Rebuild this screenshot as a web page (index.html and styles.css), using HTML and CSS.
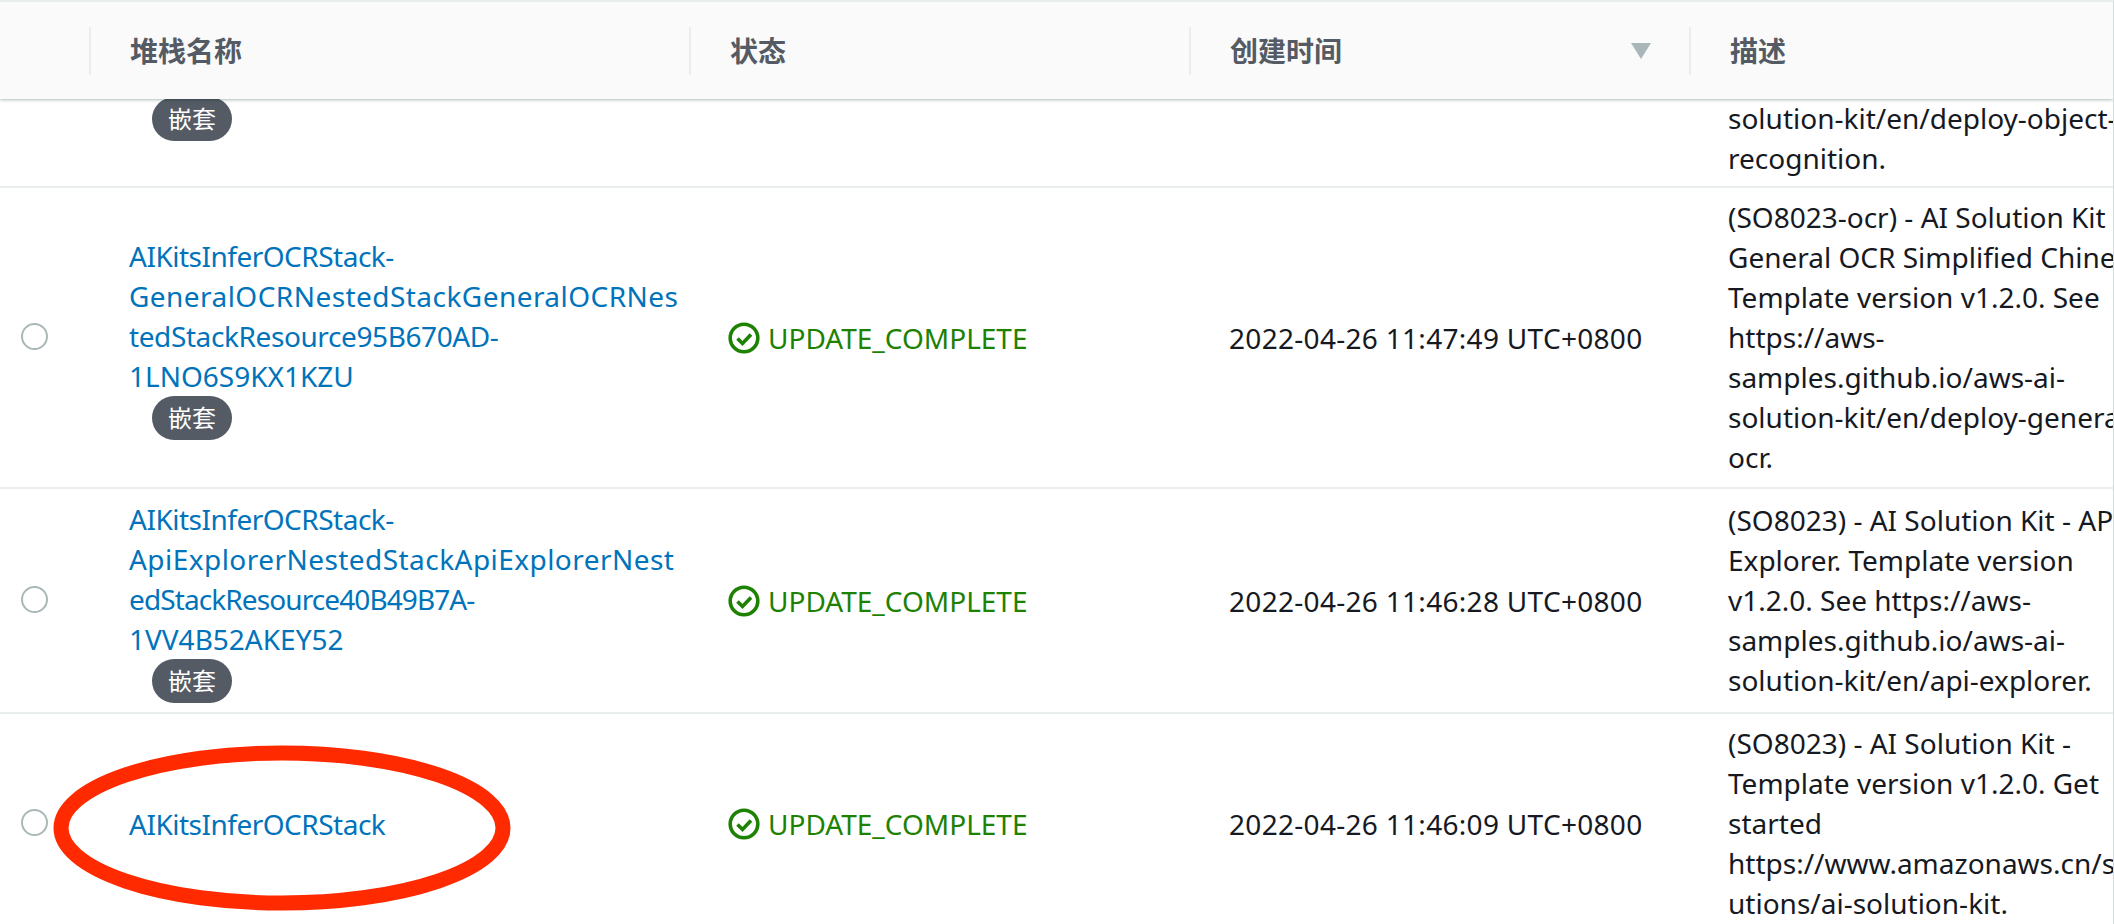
FILE: index.html
```html
<!DOCTYPE html>
<html lang="zh-CN">
<head>
  <meta charset="UTF-8">
  <title>堆栈</title>
  <link rel="stylesheet" href="styles.css">
</head>
<body>

  <div class="table">
    <div class="head">
      <div class="head-cell"></div>
      <div class="head-cell">堆栈名称</div>
      <div class="head-cell">状态</div>
      <div class="head-cell sorted">创建时间 <span class="sort-arrow"></span></div>
      <div class="head-cell">描述</div>
    </div>

    <div class="row row-cut">
      <div class="cell"></div>
      <div class="cell name"><span class="badge">嵌套</span></div>
      <div class="cell"></div>
      <div class="cell"></div>
      <div class="cell desc">solution-kit/en/deploy-object-<br>recognition.</div>
    </div>

    <div class="row">
      <div class="cell"><span class="radio"></span></div>
      <div class="cell name">
        <a href="#"><span class="snug">AIKitsInferOCRStack-</span><span class="wide">GeneralOCRNestedStackGeneralOCRNes</span><span class="snug-more">tedStackResource95B670AD-</span><span>1LNO6S9KX1KZU</span></a>
        <span class="badge">嵌套</span>
      </div>
      <div class="cell status">
        <svg class="ok" viewBox="0 0 32 32"><circle cx="16" cy="16" r="13.8" fill="none" stroke="#1d8102" stroke-width="3.6"/><path d="M9.5 16.5l5 5 8.5-9" fill="none" stroke="#1d8102" stroke-width="3.6"/></svg>
        UPDATE_COMPLETE
      </div>
      <div class="cell date">2022-04-26 11:47:49 UTC+0800</div>
      <div class="cell desc">(SO8023-ocr) - AI Solution Kit -<br>General OCR Simplified Chinese.<br>Template version v1.2.0. See<br>https://aws-<br>samples.github.io/aws-ai-<br>solution-kit/en/deploy-general-<br>ocr.</div>
    </div>

    <div class="row">
      <div class="cell"><span class="radio"></span></div>
      <div class="cell name">
        <a href="#"><span class="snug">AIKitsInferOCRStack-</span><span class="wide">ApiExplorerNestedStackApiExplorerNest</span><span class="snug-most">edStackResource40B49B7A-</span><span>1VV4B52AKEY52</span></a>
        <span class="badge">嵌套</span>
      </div>
      <div class="cell status">
        <svg class="ok" viewBox="0 0 32 32"><circle cx="16" cy="16" r="13.8" fill="none" stroke="#1d8102" stroke-width="3.6"/><path d="M9.5 16.5l5 5 8.5-9" fill="none" stroke="#1d8102" stroke-width="3.6"/></svg>
        UPDATE_COMPLETE
      </div>
      <div class="cell date">2022-04-26 11:46:28 UTC+0800</div>
      <div class="cell desc">(SO8023) - AI Solution Kit - API<br>Explorer. Template version<br>v1.2.0. See https://aws-<br>samples.github.io/aws-ai-<br>solution-kit/en/api-explorer.</div>
    </div>

    <div class="row">
      <div class="cell"><span class="radio"></span></div>
      <div class="cell name"><a href="#"><span class="snug">AIKitsInferOCRStack</span></a></div>
      <div class="cell status">
        <svg class="ok" viewBox="0 0 32 32"><circle cx="16" cy="16" r="13.8" fill="none" stroke="#1d8102" stroke-width="3.6"/><path d="M9.5 16.5l5 5 8.5-9" fill="none" stroke="#1d8102" stroke-width="3.6"/></svg>
        UPDATE_COMPLETE
      </div>
      <div class="cell date">2022-04-26 11:46:09 UTC+0800</div>
      <div class="cell desc">(SO8023) - AI Solution Kit -<br>Template version v1.2.0. Get<br>started<br>https://www.amazonaws.cn/sol<br>utions/ai-solution-kit.</div>
    </div>

    <svg class="circle-mark" viewBox="0 0 470 178"><ellipse cx="235" cy="89" rx="221" ry="75" fill="none" stroke="#ff2a00" stroke-width="15"/></svg>
  </div>

</body>
</html>
```

FILE: styles.css
```css
html, body {
  height: 100%;
}

body {
  margin: 0;
  overflow: hidden;
  background: #fff;
  color: #16191f;
  font-family: 'Noto Sans', 'Noto Sans CJK SC', sans-serif;
  font-size: 28px;
  line-height: 40px;
}

.table {
  position: relative;
  height: 100%;
  overflow: hidden;
  border-right: 1px solid #d5dbdb;
  border-top: 2px solid #eaeded;
}

.head, .row {
  display: grid;
  grid-template-columns: 89px 600px 500px 500px 1fr;
}

.head {
  position: relative;
  z-index: 2;
  height: 97px;
  align-items: center;
  background: #fafafa;
  box-shadow: 0 1px 3px rgba(0, 28, 36, 0.3);
  color: #545b64;
  font-weight: 700;
}

.head-cell {
  height: 48px;
  padding-left: 39px;
  border-left: 2px solid #eaeded;
  line-height: 48px;
}

.head-cell:first-child {
  border-left: none;
}

.sorted {
  display: flex;
  justify-content: space-between;
  align-items: center;
  padding-right: 38px;
}

.sort-arrow {
  width: 0;
  height: 0;
  border-left: 10px solid transparent;
  border-right: 10px solid transparent;
  border-top: 16px solid #aab7b8;
}

.row {
  align-items: center;
  border-bottom: 2px solid #eaeded;
}

/* first row is scrolled under the header */
.row-cut {
  grid-template-rows: 87px;
  align-items: end;
}

.row-cut .desc {
  padding-bottom: 8px;
}

.row-cut .name {
  padding-bottom: 45px;
}

.cell {
  white-space: nowrap;
}

.radio {
  display: block;
  box-sizing: border-box;
  width: 27px;
  height: 27px;
  margin: -3px 0 0 21px;
  border: 2px solid #aab7b8;
  border-radius: 50%;
}

.name {
  padding: 10px 0 9px 40px;
}

.name a {
  display: block;
  color: #0073bb;
  text-decoration: none;
}

.name a span {
  display: block;
}

.name .snug {
  letter-spacing: -0.5px;
}

.name .snug-more {
  letter-spacing: -0.4px;
}

.name .snug-most {
  letter-spacing: -0.9px;
}

.name .wide {
  letter-spacing: 0.45px;
}

.badge {
  display: block;
  width: 80px;
  height: 44px;
  margin-left: 23px;
  border-radius: 22px;
  background: #545b64;
  color: #fff;
  font-size: 24px;
  line-height: 44px;
  text-align: center;
}

.status {
  display: flex;
  align-items: center;
  gap: 8px;
  padding-left: 39px;
  color: #1d8102;
}

.ok {
  width: 32px;
  height: 32px;
}

.date {
  padding-left: 40px;
  letter-spacing: 0.3px;
}

.desc {
  padding: 9px 0 10px 39px;
  overflow: hidden;
}

.circle-mark {
  position: absolute;
  left: 47px;
  top: 737px;
  width: 470px;
  height: 178px;
}
```
